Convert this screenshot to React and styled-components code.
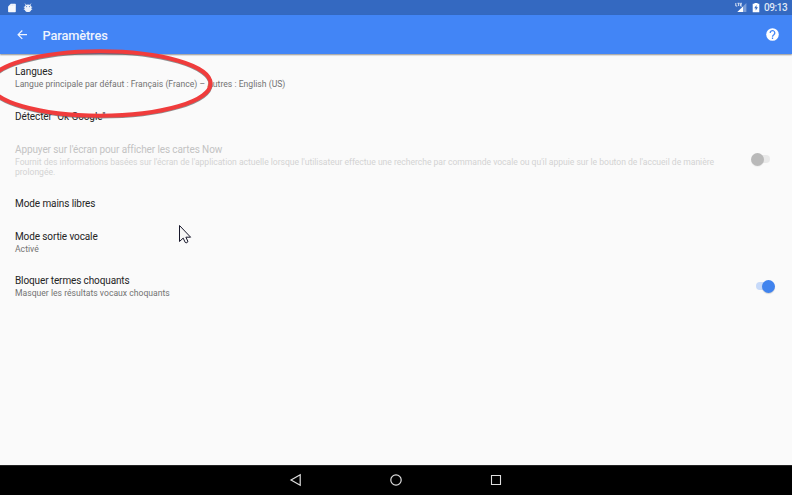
import React from "react";
import styled, { createGlobalStyle } from "styled-components";

const GlobalStyle = createGlobalStyle`
  * { box-sizing: border-box; }
  body { margin: 0; overflow: hidden; font-family: Roboto, "Liberation Sans", sans-serif; }
`;

const Screen = styled.div`
  position: relative;
  display: flex;
  flex-direction: column;
  width: 792px;
  height: 495px;
  overflow: hidden;
  background: #fafafa;
`;

const StatusBar = styled.div`
  display: flex;
  align-items: center;
  justify-content: space-between;
  flex: none;
  height: 15px;
  padding: 0 4px 0 7px;
  background: #3469c1;
`;

const StatusGroup = styled.div`
  display: flex;
  align-items: center;
  gap: ${(p) => p.$gap}px;
`;

const Clock = styled.span`
  width: 24px;
  margin-left: -1px;
  color: #dfe7f5;
  font-size: 10px;
  font-weight: 500;
  line-height: 15px;
  letter-spacing: -0.45px;
  white-space: nowrap;
`;

const AppBar = styled.header`
  display: flex;
  align-items: center;
  flex: none;
  height: 39px;
  padding: 1px 13.5px 0 16px;
  background: #4285f6;
  box-shadow: 0 1px 1.5px rgba(0, 0, 0, 0.42);
`;

const Title = styled.h1`
  flex: 1;
  margin: 1px 0 0 13.5px;
  color: #eef3fd;
  font-size: 12.8px;
  font-weight: 500;
  letter-spacing: -0.12px;
  line-height: 18px;
`;

const List = styled.main`
  flex: 1;
  padding-top: 1px;
`;

const Row = styled.section`
  display: flex;
  align-items: center;
  justify-content: space-between;
  height: ${(p) => p.$height}px;
  padding: 0 16px 0 15px;
`;

const RowText = styled.div`
  width: 712px;
`;

const Label = styled.div`
  color: ${(p) => (p.$disabled ? "#c3c3c3" : "#242424")};
  font-size: 10px;
  line-height: 13px;
  letter-spacing: ${(p) => p.$spacing}px;
`;

const Summary = styled.div`
  color: ${(p) => (p.$disabled ? "#d3d3d3" : "#727272")};
  font-size: 8.6px;
  line-height: ${(p) => (p.$disabled ? 10 : 12)}px;
  padding-top: ${(p) => (p.$disabled ? 1 : 0)}px;
  letter-spacing: ${(p) => (p.$disabled ? -0.03 : 0.013)}px;
  white-space: pre-line;
`;

const Track = styled.span`
  display: flex;
  align-items: center;
  justify-content: ${(p) => (p.$on ? "flex-end" : "flex-start")};
  width: 14px;
  height: 8px;
  margin: 0 6px 1px 0;
  border-radius: 4px;
  background: ${(p) => (p.$on ? "#c6d9f9" : "#e9e9e9")};
`;

const Thumb = styled.span`
  flex: none;
  width: 13px;
  height: 13px;
  margin: 0 ${(p) => (p.$on ? "-5px 0 0" : "0 0 -5.5px")};
  border-radius: 50%;
  background: ${(p) => (p.$on ? "#4083ee" : "#b9b9b9")};
  box-shadow: 0 1px 1px rgba(0, 0, 0, ${(p) => (p.$on ? 0.15 : 0.05)});
`;

const NavBar = styled.nav`
  display: flex;
  align-items: center;
  justify-content: center;
  flex: none;
  gap: 86px;
  height: 30px;
  padding-bottom: 1px;
  background: #000;
  border-top: 1px solid #222;
`;

const Annotation = styled.svg`
  position: absolute;
  left: 0;
  top: 40px;
  pointer-events: none;
`;

const Pointer = styled.svg`
  position: absolute;
  left: 178px;
  top: 224px;
  pointer-events: none;
`;

const rows = [
  { label: "Langues", summary: "Langue principale par défaut : Français (France) – Autres : English (US)", height: 45, spacing: -0.03 },
  { label: "Détecter \"Ok Google\"", height: 33, spacing: -0.1 },
  {
    label: "Appuyer sur l'écran pour afficher les cartes Now",
    summary: "Fournit des informations basées sur l'écran de l'application actuelle lorsque l'utilisateur effectue une recherche par commande vocale ou qu'il appuie sur le bouton de l'accueil de manière\nprolongée.",
    height: 53, spacing: -0.11, disabled: true, toggle: "off",
  },
  { label: "Mode mains libres", height: 34, spacing: -0.09 },
  { label: "Mode sortie vocale", summary: "Activé", height: 44, spacing: -0.12 },
  { label: "Bloquer termes choquants", summary: "Masquer les résultats vocaux choquants", height: 45, spacing: -0.12, toggle: "on" },
];

function SdIcon() {
  return (
    <svg width="9" height="10" viewBox="0 0 9 10">
      <path d="M3.8.7h4.3a.7.7 0 0 1 .7.7v7.2a.7.7 0 0 1-.7.7H1.8a.7.7 0 0 1-.7-.7V3.4z" fill="#f7f9fd" />
      <path d="M4 1.5v1.2M5.5 1.5v1.2M7 1.5v1.2" stroke="#c3d2ec" strokeWidth=".5" />
    </svg>
  );
}

function RobotIcon() {
  return (
    <svg width="10" height="10" viewBox="0 0 10 10">
      <path d="M2 .6l1.2 1.6M8 .6L6.8 2.2M.8 4.2h1.4M9.2 4.2H7.8M.8 6.4h1.4M9.2 6.4H7.8" stroke="#e8eef9" strokeWidth=".8" />
      <path d="M1.6 4.2C1.6 2.6 3 1.5 5 1.5s3.4 1.1 3.4 2.7v1.7C8.4 7.8 7 9 5 9S1.6 7.8 1.6 5.9z" fill="#edf2fb" />
      <circle cx="3.6" cy="3.6" r=".55" fill="#4c79c6" />
      <circle cx="6.4" cy="3.6" r=".55" fill="#4c79c6" />
    </svg>
  );
}

function SignalIcon() {
  return (
    <svg width="12" height="11" viewBox="0 0 12 11">
      <path d="M11.4 1v9H2.4z" fill="#7d9fd8" />
      <path d="M8 4.4V10H2.4z" fill="#fff" />
      <path d="M.8 1v3h1.5M2.5 1.3h2.2M3.6 1.3V4M7 1.3H5.4V4H7M5.4 2.6h1.3" fill="none" stroke="#dce6f7" strokeWidth=".95" />
    </svg>
  );
}

function BatteryIcon() {
  return (
    <svg width="8" height="10" viewBox="0 0 8 10">
      <path d="M2.4.1h3.2v.6h1.7v8.5H.7V.7h1.7z" fill="#fff" />
      <path d="M4.5 1.9L2.2 5.2h1.5v2.3L6 4.3H4.5z" fill="#3469c1" />
    </svg>
  );
}

export default function App() {
  return (
    <>
      <GlobalStyle />
      <Screen>
        <StatusBar>
          <StatusGroup $gap={7}>
            <SdIcon />
            <RobotIcon />
          </StatusGroup>
          <StatusGroup $gap={5}>
            <SignalIcon />
            <BatteryIcon />
            <Clock>09:13</Clock>
          </StatusGroup>
        </StatusBar>
        <AppBar>
          <svg width="13" height="12" viewBox="0 0 13 12">
            <path d="M11 5.7H2.2M6.3 1.5L2.1 5.7l4.2 4.2" fill="none" stroke="#f0f5ff" strokeWidth="1.2" />
          </svg>
          <Title>Paramètres</Title>
          <svg width="13" height="14" viewBox="0 0 13 14">
            <circle cx="6.5" cy="6.5" r="6.3" fill="#fff" />
            <path d="M4.2 5a2.3 2.3 0 1 1 3.8 1.6C7.1 7.2 6.5 7.5 6.5 8.7M6.5 9.6V11" fill="none" stroke="#4285f6" strokeWidth="1.3" />
          </svg>
        </AppBar>
        <List>
          {rows.map((r) => (
            <Row key={r.label} $height={r.height}>
              <RowText>
                <Label $disabled={r.disabled} $spacing={r.spacing}>{r.label}</Label>
                {r.summary && <Summary $disabled={r.disabled}>{r.summary}</Summary>}
              </RowText>
              {r.toggle && (
                <Track $on={r.toggle === "on"}>
                  <Thumb $on={r.toggle === "on"} />
                </Track>
              )}
            </Row>
          ))}
        </List>
        <NavBar>
          <svg width="14" height="14" viewBox="0 0 14 14">
            <path d="M11.2 1.7v10.6L2 7z" fill="none" stroke="#dedede" strokeWidth="1.2" />
          </svg>
          <svg width="14" height="14" viewBox="0 0 14 14">
            <circle cx="7" cy="7" r="5.2" fill="none" stroke="#dedede" strokeWidth="1.2" />
          </svg>
          <svg width="14" height="14" viewBox="0 0 14 14">
            <path d="M2.5 2.5h9v9h-9z" fill="none" stroke="#dedede" strokeWidth="1.1" />
          </svg>
        </NavBar>
        <Annotation width="220" height="85" viewBox="0 40 220 85">
          <ellipse cx="100.3" cy="84.4" rx="110.3" ry="32.2" fill="none" stroke="#555" strokeOpacity=".65" strokeWidth="4" />
          <ellipse cx="100.3" cy="83.5" rx="110.3" ry="32.2" fill="none" stroke="#f03c3c" strokeWidth="4" />
        </Annotation>
        <Pointer width="15" height="22" viewBox="0 0 15 22">
          <path d="M1.5 1.5v16l3.7-3.4 2 4.3c.8 1 3 .1 2.6-1.2l-1.9-4h4.7z" fill="#f6f6f6" stroke="#17172a" strokeWidth="1" />
        </Pointer>
      </Screen>
    </>
  );
}
